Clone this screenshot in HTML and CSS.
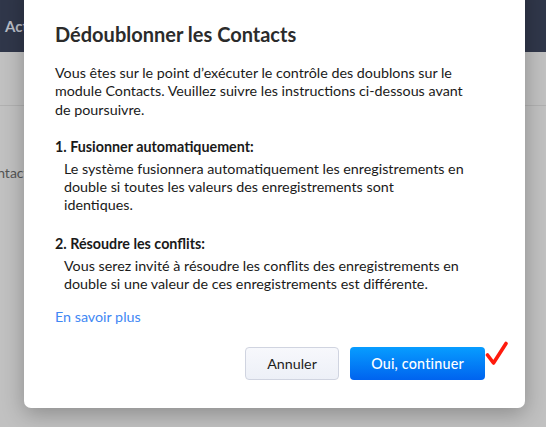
FILE: index.html
```html
<!DOCTYPE html>
<html lang="fr">
<head>
<meta charset="utf-8">
<link rel="stylesheet" href="styles.css">
</head>
<body>
<div class="page">
  <header class="topbar"><span class="topbar-title">Actions</span></header>
  <div class="content">
    <div class="content-head"></div>
    <div class="content-row">Contacts</div>
  </div>
</div>
<div class="modal">
  <h1 class="modal-title">Dédoublonner les Contacts</h1>
  <p class="intro">Vous êtes sur le point d’exécuter le contrôle des doublons sur le module Contacts. Veuillez suivre les instructions ci-dessous avant de poursuivre.</p>
  <h2 class="step-title">1. Fusionner automatiquement:</h2>
  <p class="step-text">Le système fusionnera automatiquement les enregistrements en double si toutes les valeurs des enregistrements sont identiques.</p>
  <h2 class="step-title">2. Résoudre les conflits:</h2>
  <p class="step-text">Vous serez invité à résoudre les conflits des enregistrements en double si une valeur de ces enregistrements est différente.</p>
  <a class="more" href="#">En savoir plus</a>
  <div class="actions">
    <button class="btn btn-cancel">Annuler</button>
    <button class="btn btn-primary">Oui, continuer</button>
    <svg class="check" width="24" height="28" viewBox="0 0 24 28"><path d="M2.5 14 L8.5 22 L21 2.5" fill="none" stroke="#ff1a0d" stroke-width="3.6" stroke-linecap="round" stroke-linejoin="round"/></svg>
  </div>
</div>
</body>
</html>
```
FILE: styles.css
```css
* { box-sizing: border-box; }
html, body { margin: 0; padding: 0; }
body {
  width: 546px;
  height: 427px;
  overflow: hidden;
  font-family: Lato, "Open Sans", sans-serif;
  background: #c1c1c1;
  position: relative;
}
.page { width: 546px; height: 427px; display: flex; flex-direction: column; }
.topbar {
  height: 52px;
  background: #30374a;
  display: flex;
  align-items: center;
  padding-left: 5px;
}
.topbar-title { color: #b9bdc6; font-weight: 700; font-size: 15px; }
.content { flex: 1; background: #c1c1c1; }
.content-head { height: 54px; border-bottom: 1px solid #b1b1b1; }
.content-row { padding: 58px 0 0 0; margin-left: -20px; font-size: 14px; color: #555; }

.modal {
  position: absolute;
  left: 24px;
  top: -20px;
  width: 501px;
  height: 428px;
  background: #fff;
  border-radius: 0 0 7px 7px;
  box-shadow: 0 6px 22px rgba(0,0,0,0.28);
  padding: 39px 55px 0 31px;
  color: #1a1a1a;
}
.modal-title {
  margin: 0;
  font-size: 20px;
  font-weight: 700;
  line-height: 30px;
  color: #2b2b2b;
}
.intro {
  margin: 15px 0 0 0;
  font-size: 14.3px;
  line-height: 18.3px;
}
.step-title {
  margin: 19px 0 0 0;
  font-size: 14.3px;
  font-weight: 700;
  line-height: 18px;
}
.step-text {
  margin: 4px 6px 0 9px;
  font-size: 14.3px;
  line-height: 18.3px;
}
.step-text + .step-title { margin-top: 20px; }
.more {
  display: block;
  margin-top: 15px;
  font-size: 14.3px;
  line-height: 18px;
  color: #3f88f4;
  text-decoration: none;
}
.actions {
  display: flex;
  justify-content: flex-end;
  align-items: flex-start;
  margin-top: 21px;
  margin-right: -39px;
}
.btn {
  height: 33px;
  font-family: Lato, sans-serif;
  font-size: 14.3px;
  border-radius: 4px;
  padding: 0;
}
.btn-cancel {
  width: 94px;
  background: linear-gradient(#f7f8fc, #edf0f7);
  border: 1px solid #d0d4e0;
  color: #1e1e1e;
  margin-right: 11px;
}
.btn-primary {
  width: 135px;
  background: linear-gradient(#079dff, #0063ef);
  border: none;
  color: #fff;
  font-weight: 500;
  letter-spacing: 0.2px;
}
.check { margin-top: -6px; margin-left: 0; }
```
